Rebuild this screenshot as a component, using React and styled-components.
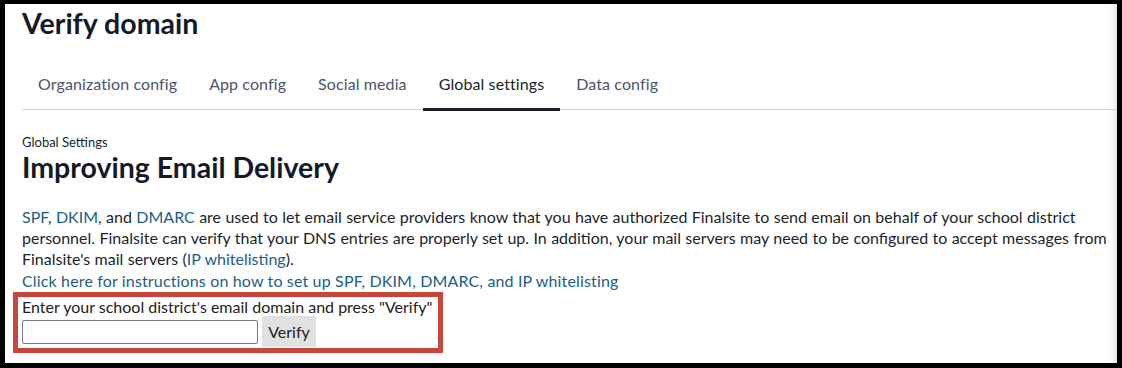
import React from 'react';
import styled, { createGlobalStyle } from 'styled-components';

const GlobalStyle = createGlobalStyle`
  html, body {
    margin: 0;
    padding: 0;
    background: #000;
  }
  body {
    font-family: Lato, "Noto Sans", sans-serif;
    color: #1b1f2a;
  }
`;

const Frame = styled.div`
  height: 368px;
  box-sizing: border-box;
  padding: 4px 5px 5px 5px;
`;

const Panel = styled.main`
  height: 100%;
  background: #fff;
  box-shadow: inset -6px 0 6px -4px rgba(0, 0, 0, 0.12);
  padding: 0 0 0 17px;
  box-sizing: border-box;
  overflow: hidden;
`;

const PageTitle = styled.h1`
  margin: 0;
  padding-top: 2px;
  font-size: 28.5px;
  line-height: 34px;
  font-weight: 700;
  color: #141a26;
`;

const Tabs = styled.nav`
  display: flex;
  margin-top: 21px;
  border-bottom: 1px solid #d4d4d4;
`;

const Tab = styled.a`
  display: block;
  padding: 0 16px;
  height: 50px;
  line-height: 46px;
  font-size: 16px;
  letter-spacing: 0.1px;
  color: ${props => (props.active ? '#1b1f2a' : '#4b5568')};
  border-bottom: 3px solid ${props => (props.active ? '#1b1f2a' : 'transparent')};
  margin-bottom: -2px;
  box-sizing: border-box;
  cursor: pointer;
`;

const Section = styled.section`
  padding-top: 23px;
`;

const Eyebrow = styled.div`
  font-size: 13px;
  line-height: 18px;
  color: #1b1f2a;
`;

const SectionTitle = styled.h2`
  margin: 0;
  font-size: 28.5px;
  line-height: 32px;
  font-weight: 700;
  color: #141a26;
`;

const Paragraph = styled.p`
  margin: 23px 0 0;
  font-size: 16px;
  line-height: 21px;
  word-spacing: 0.3px;
  color: #1b1f2a;
`;

const TextLink = styled.a`
  color: #1d5d86;
  text-decoration: none;
  cursor: pointer;
`;

const InstructionsLink = styled(TextLink)`
  display: block;
  margin-top: 1px;
  font-size: 16px;
  line-height: 22px;
  letter-spacing: 0.15px;
`;

const VerifyBox = styled.form`
  display: flex;
  flex-direction: column;
  width: 430px;
  box-sizing: border-box;
  margin: 0 0 0 -9px;
  padding: 0 4px 1px 4px;
  border: 5px solid #c8463e;
`;

const FieldLabel = styled.label`
  font-size: 16px;
  line-height: 19px;
  white-space: nowrap;
  color: #222;
`;

const FieldRow = styled.div`
  display: flex;
  align-items: center;
  gap: 4px;
  height: 31px;
`;

const DomainInput = styled.input`
  width: 236px;
  height: 24px;
  box-sizing: border-box;
  border: 1px solid #7a7a7a;
  border-radius: 2px;
  padding: 0 4px;
  font: inherit;
  font-size: 14px;
`;

const VerifyButton = styled.button`
  height: 31px;
  width: 54px;
  padding: 0;
  border: none;
  border-radius: 2px;
  background: #e1e1e1;
  color: #222;
  font-family: inherit;
  font-size: 16px;
  cursor: pointer;
`;

const tabs = ['Organization config', 'App config', 'Social media', 'Global settings', 'Data config'];

export default function App() {
  return (
    <>
      <GlobalStyle />
      <Frame>
        <Panel>
          <PageTitle>Verify domain</PageTitle>
          <Tabs>
            {tabs.map(t => (
              <Tab key={t} active={t === 'Global settings'}>{t}</Tab>
            ))}
          </Tabs>
          <Section>
            <Eyebrow>Global Settings</Eyebrow>
            <SectionTitle>Improving Email Delivery</SectionTitle>
            <Paragraph>
              <TextLink>SPF</TextLink>, <TextLink>DKIM</TextLink>, and <TextLink>DMARC</TextLink> are used to let
              email service providers know that you have authorized Finalsite to send email on behalf of your school
              district personnel. Finalsite can verify that your DNS entries are properly set up. In addition, your
              mail servers may need to be configured to accept messages from Finalsite's mail servers (
              <TextLink>IP whitelisting</TextLink>).
            </Paragraph>
            <InstructionsLink>Click here for instructions on how to set up SPF, DKIM, DMARC, and IP whitelisting</InstructionsLink>
            <VerifyBox onSubmit={e => e.preventDefault()}>
              <FieldLabel htmlFor="domain">Enter your school district's email domain and press "Verify"</FieldLabel>
              <FieldRow>
                <DomainInput id="domain" type="text" />
                <VerifyButton type="submit">Verify</VerifyButton>
              </FieldRow>
            </VerifyBox>
          </Section>
        </Panel>
      </Frame>
    </>
  );
}
